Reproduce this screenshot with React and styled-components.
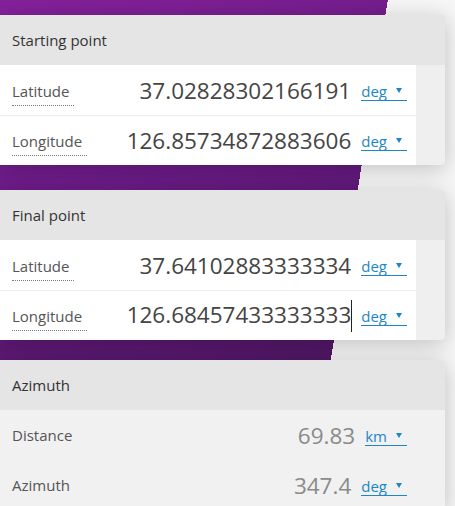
import React from "react";
import styled, { createGlobalStyle } from "styled-components";

const GlobalStyle = createGlobalStyle`
  html, body {
    margin: 0;
    padding: 0;
  }
  body {
    font-family: "Open Sans", "Noto Sans", "Liberation Sans", sans-serif;
    background: #ffffff;
    overflow: hidden;
  }
`;

const Page = styled.div`
  width: 455px;
  height: 506px;
  box-sizing: border-box;
  padding-top: 15px;
  display: flex;
  flex-direction: column;
  background:
    linear-gradient(99deg, transparent 0 383px, #f6f6f6 383px),
    linear-gradient(160deg, #85219b 0%, #6a1b86 35%, #521766 70%, #3f1254 100%);
  overflow: hidden;
`;

const Card = styled.section`
  width: 445px;
  flex-shrink: 0;
  margin-top: ${(p) => p.$top || 0}px;
  border-radius: 0 4px 4px 0;
  overflow: hidden;
  background: ${(p) => (p.$output ? "#f1f1f1" : "#efefef")};
  box-shadow: 0 4px 22px rgba(0, 0, 0, 0.22);
`;

const Header = styled.div`
  height: 50px;
  display: flex;
  align-items: center;
  padding-left: 12px;
  background: #e5e5e5;
  color: #333;
  font-size: 15px;
`;

const Rows = styled.div`
  width: ${(p) => (p.$output ? "445px" : "416px")};
  background: ${(p) => (p.$output ? "#f1f1f1" : "#ffffff")};
`;

const Row = styled.div`
  height: 50px;
  box-sizing: border-box;
  display: flex;
  align-items: center;
  padding: 0 9px 0 12px;
  width: 416px;
  border-top: ${(p) => (p.$first || p.$output ? "none" : "1px solid #ececec")};
`;

const Label = styled.span`
  color: #555;
  font-size: 15px;
  margin-top: ${(p) => (p.$dotted ? "6px" : "0")};
  padding-right: ${(p) => (p.$dotted ? "5px" : "0")};
  padding-bottom: ${(p) => (p.$dotted ? "4px" : "0")};
  border-bottom: ${(p) => (p.$dotted ? "1px dotted #7a7a7a" : "none")};
  line-height: 20px;
`;

const Value = styled.span`
  flex: 1;
  text-align: right;
  font-size: 22.5px;
  color: ${(p) => (p.$output ? "#8a8a8a" : "#444")};
  margin-right: 10px;
`;

const Caret = styled.span`
  display: inline-block;
  width: 1px;
  height: 32px;
  background: #222;
  vertical-align: middle;
  margin-right: -1px;
`;

const Unit = styled.a`
  color: #1c87c4;
  font-size: 15px;
  text-decoration: none;
  border-bottom: 1px solid #1c87c4;
  line-height: 17px;
  display: inline-flex;
  align-items: flex-start;
  gap: 9px;
  padding-right: 5px;
  margin-top: 3px;
`;

const Arrow = styled.span`
  width: 0;
  height: 0;
  margin-top: 5px;
  border-left: 3px solid transparent;
  border-right: 3px solid transparent;
  border-top: 5px solid #1c87c4;
`;

function DataRow({ label, value, unit, first, output, caret }) {
  return (
    <Row $first={first} $output={output}>
      <Label $dotted={!output}>{label}</Label>
      <Value $output={output}>
        {value}
        {caret && <Caret />}
      </Value>
      <Unit href="#">
        {unit}
        <Arrow />
      </Unit>
    </Row>
  );
}

function PointCard({ title, lat, lon, top, caret }) {
  return (
    <Card $top={top}>
      <Header>{title}</Header>
      <Rows>
        <DataRow first label="Latitude" value={lat} unit="deg" />
        <DataRow label="Longitude" value={lon} unit="deg" caret={caret} />
      </Rows>
    </Card>
  );
}

export default function App() {
  return (
    <>
      <GlobalStyle />
      <Page>
        <PointCard title="Starting point" lat="37.02828302166191" lon="126.85734872883606" />
        <PointCard title="Final point" lat="37.64102883333334" lon="126.68457433333333" top={25} caret />
        <Card $output $top={20}>
          <Header>Azimuth</Header>
          <Rows $output>
            <DataRow output first label="Distance" value="69.83" unit="km" />
            <DataRow output label="Azimuth" value="347.4" unit="deg" />
          </Rows>
        </Card>
      </Page>
    </>
  );
}
